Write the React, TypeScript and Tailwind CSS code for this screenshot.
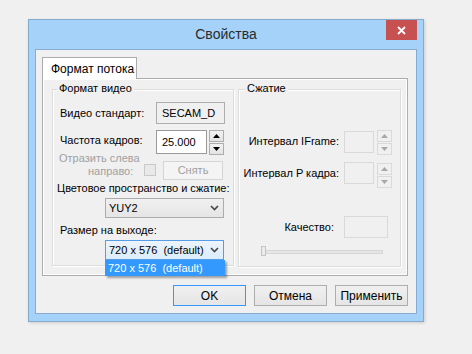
import clsx from "clsx";

function SpinBox({ disabled }: { disabled?: boolean }) {
  const btn = clsx(
    "w-[15px] h-[12px] border flex items-center justify-center",
    disabled ? "border-[#dadada] bg-[#f0f0f0]" : "border-[#adadad] bg-gradient-to-b from-[#f2f2f2] to-[#e3e3e3]"
  );
  const fill = disabled ? "#a8a8a8" : "#000";
  return (
    <div className="flex flex-col gap-[1px]">
      <div className={btn}>
        <svg width="7" height="4" viewBox="0 0 7 4">
          <polygon points="0,4 7,4 3.5,0" fill={fill} />
        </svg>
      </div>
      <div className={btn}>
        <svg width="7" height="4" viewBox="0 0 7 4">
          <polygon points="0,0 7,0 3.5,4" fill={fill} />
        </svg>
      </div>
    </div>
  );
}

function Chevron() {
  return (
    <svg width="9" height="6" viewBox="0 0 9 6">
      <polyline points="1,1 4.5,4.5 8,1" fill="none" stroke="#444" strokeWidth="1.6" />
    </svg>
  );
}

export default function App() {
  return (
    <div className="w-[472px] h-[354px] bg-[#f0f0f0] pt-[19px] pl-[28px] font-['Liberation_Sans',Arial,sans-serif] text-[11px] text-black whitespace-nowrap">
      <div className="w-[396px] h-[303px] border border-[#84aacc] bg-[#a5d2f9] flex flex-col shadow-[1px_1px_3px_rgba(0,0,0,0.15)]">
        {/* title bar */}
        <div className="relative h-[29px] flex items-center justify-center">
          <span className="text-[14px] text-[#2b2b2b]">Свойства</span>
          <div className="absolute right-[6px] top-0 w-[31px] h-[20px] bg-[#c75050] flex items-center justify-center">
            <svg width="9" height="9" viewBox="0 0 9 9">
              <path d="M1 1L8 8M8 1L1 8" stroke="#fff" strokeWidth="1.8" />
            </svg>
          </div>
        </div>

        {/* client area */}
        <div className="mx-[6px] h-[265px] border border-[#89abcf] bg-[#f0f0f0] pl-[6px] pr-[8px] pt-[7px]">
          <div className="relative z-10 -mb-px w-[95px] h-[22px] bg-white border border-b-0 border-[#acacac] pl-[8px] flex items-center text-[12px]">
            Формат потока
          </div>
          <div className="w-[366px] h-[198px] border border-[#acacac] shadow-[inset_1px_1px_0_#fff,inset_-1px_-1px_0_#fff] pl-[9px] pt-[10px] flex gap-[4px]">
            {/* video format group */}
            <div className="relative w-[182px] h-[177px] border border-[#dcdcdc] shadow-[inset_1px_1px_0_#fff,1px_1px_0_#fff]">
              <span className="absolute left-[4px] -top-[9px] px-[2px] bg-[#f0f0f0] leading-[15px]">Формат видео</span>
              <div className="flex flex-col pl-[7px]">
                <div className="mt-[11px] h-[24px] flex items-center">
                  <span className="w-[96px]">Видео стандарт:</span>
                  <div className="w-[69px] h-[22px] border border-[#adadad] bg-[#f0f0f0] pl-[5px] flex items-center">SECAM_D</div>
                </div>
                <div className="mt-[4px] h-[26px] flex items-center">
                  <span className="w-[96px] -mt-[3px]">Частота кадров:</span>
                  <div className="w-[51px] h-[24px] border border-[#9a9a9a] bg-white pl-[5px] flex items-center">25.000</div>
                  <div className="ml-[2px]">
                    <SpinBox />
                  </div>
                </div>
                <div className="h-[26px] flex items-center">
                  <div className="w-[85px] -ml-[1px] -mt-[6px] leading-[13px] text-[#a0a0a0]">
                    <div>Отразить слева</div>
                    <div className="pl-[29px]">направо:</div>
                  </div>
                  <div className="mt-[4px] w-[12px] h-[12px] border border-[#c9c9c9] bg-[#e9e9e9]" />
                  <div className="mt-[4px] ml-[7px] w-[60px] h-[19px] border border-[#d5d5d5] bg-[#f4f4f4] text-[#a0a0a0] flex items-center justify-center">
                    Снять
                  </div>
                </div>
                <div className="h-[14px] -ml-[3px] flex items-center">Цветовое пространство и сжатие:</div>
                <div className="mt-[3px] ml-[45px] w-[119px] h-[20px] border border-[#acacac] bg-gradient-to-b from-[#f0f0f0] to-[#e5e5e5] pl-[3px] pr-[4px] flex items-center justify-between">
                  <span>YUY2</span>
                  <Chevron />
                </div>
                <div className="mt-[4px] h-[16px] flex items-center">Размер на выходе:</div>
                <div className="relative mt-[2px] ml-[45px] w-[119px] h-[20px]">
                  <div className="w-full h-full border border-[#569de5] bg-gradient-to-b from-[#ecf4fc] to-[#dcecfc] pl-[3px] pr-[4px] flex items-center justify-between">
                    <span className="whitespace-pre">720 x 576  (default)</span>
                    <Chevron />
                  </div>
                  <div className="absolute z-20 left-0 top-[20px] w-[120px] h-[16px] bg-[#3399ff] text-white pl-[3px] leading-[16px] whitespace-pre shadow-[2px_2px_2px_rgba(0,0,0,0.35)]">
                    720 x 576  (default)
                  </div>
                </div>
              </div>
            </div>

            {/* compression group */}
            <div className="relative w-[163px] h-[178px] border border-[#dcdcdc] shadow-[inset_1px_1px_0_#fff,1px_1px_0_#fff]">
              <span className="absolute left-[6px] -top-[9px] px-[2px] bg-[#f0f0f0] leading-[15px]">Сжатие</span>
              <div className="flex flex-col">
                <div className="mt-[40px] h-[26px] flex items-start">
                  <span className="w-[100px] text-right leading-[20px] mt-[1px]">Интервал IFrame:</span>
                  <div className="ml-[5px] mt-[1px] w-[30px] h-[22px] border border-[#d9d9d9]" />
                  <div className="ml-[3px]">
                    <SpinBox disabled />
                  </div>
                </div>
                <div className="mt-[6px] h-[27px] flex items-start">
                  <span className="w-[100px] text-right leading-[22px]">Интервал P кадра:</span>
                  <div className="ml-[5px] w-[30px] h-[22px] border border-[#d9d9d9]" />
                  <div className="ml-[3px] mt-[1px]">
                    <SpinBox disabled />
                  </div>
                </div>
                <div className="mt-[27px] h-[22px] flex items-center">
                  <span className="w-[95px] text-right">Качество:</span>
                  <div className="ml-[10px] w-[44px] h-[22px] border border-[#d9d9d9]" />
                </div>
                <div className="relative mt-[8px] ml-[22px] w-[122px] h-[10px]">
                  <div className="mt-[4px] h-[4px] border border-[#d6d6d6] bg-[#e6e6e6]" />
                  <div className="absolute left-0 top-0 w-[5px] h-[10px] border border-[#c4c4c4] bg-[#ececec]" />
                </div>
              </div>
            </div>
          </div>

          {/* buttons */}
          <div className="mt-[9px] flex justify-end gap-[8px] text-[12px]">
            <button className="w-[73px] h-[21px] border border-[#3399ff] bg-gradient-to-b from-[#f0f0f0] to-[#e5e5e5]">OK</button>
            <button className="w-[73px] h-[21px] border border-[#adadad] bg-gradient-to-b from-[#f0f0f0] to-[#e5e5e5]">Отмена</button>
            <button className="w-[73px] h-[21px] border border-[#adadad] bg-gradient-to-b from-[#f0f0f0] to-[#e5e5e5]">Применить</button>
          </div>
        </div>
      </div>
    </div>
  );
}
